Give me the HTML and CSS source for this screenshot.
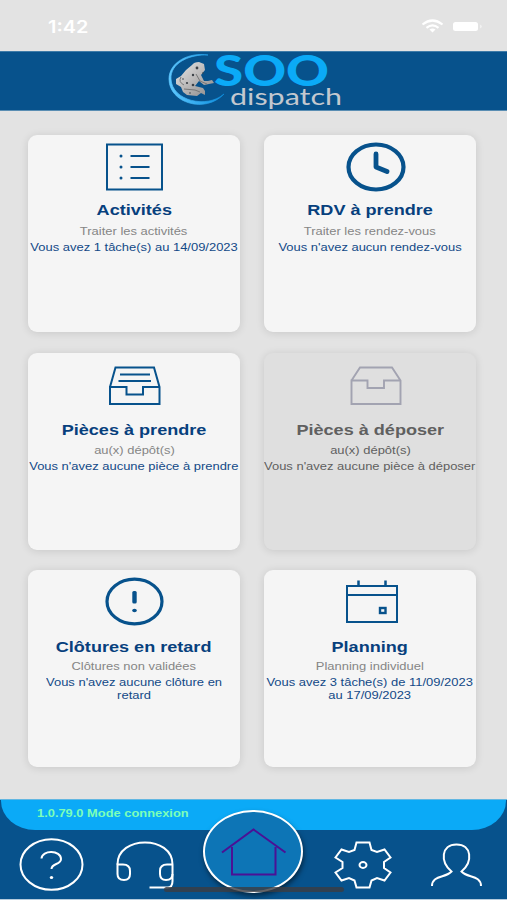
FILE: index.html
```
<!DOCTYPE html>
<html lang="fr">
<head>
  <meta charset="UTF-8" />
  <meta name="viewport" content="width=device-width, initial-scale=1.0"/>
  <title>SOO dispatch</title>
  <link rel="stylesheet" href="styles.css">
</head>
<body>

  <div class="status-bar">
    <span class="time">1:42</span>
    <svg class="status-icons" width="64" height="16" viewBox="0 0 64 16">
      <g fill="none" stroke="#fff" stroke-width="2.2">
        <path d="M1.5 5.5Q11.500 -2.500 21.500 5.500"/>
        <path d="M5.500 8.800Q11.500 4 17.500 8.800"/>
      </g>
      <path d="M8.500 10.500Q11.500 8.500 14.500 10.500L11.500 13.500Z" fill="#fff"/>
      <rect x="32" y="3" width="25" height="9" rx="2.500" fill="#fff"/>
      <path d="M59.500 5.500Q61.500 7.500 59.500 9.500Z" fill="#fff"/>
    </svg>
  </div>

  <header class="header">
    <svg class="logo" width="190" height="60" viewBox="160 51 190 60">
      <defs>
        <linearGradient id="ring" x1="0" y1="0" x2="1" y2="0">
          <stop offset="0" stop-color="#5ec8ff"/>
          <stop offset="1" stop-color="#0c8ede"/>
        </linearGradient>
        <linearGradient id="skin" x1="0" y1="0" x2="1" y2="1">
          <stop offset="0" stop-color="#e8e8e8"/>
          <stop offset="1" stop-color="#8b8888"/>
        </linearGradient>
      </defs>
      <path d="M208 55C189 52 169 62 169 79C169 103 205 114 224 94C207 109 172 101 171 79C170 63 190 54 208 55Z" fill="url(#ring)" stroke="url(#ring)" stroke-width=".7"/>
      <!-- frog -->
      <path d="M192 65Q194 62 199 62L204 64L205 70L201 75L204 81L208 81L212 80L214 83L209 84L204 85L199 81L195 86L203 88L205 91L205 95L201 93L197 96L187 95L183 92L181 87L176 84L176 79L181 76L186 70Z" fill="url(#skin)"/>
      <path d="M181 77Q178 82 184 85M184 89L195 90L200 92M196 74L200 81L207 84" fill="none" stroke="#777" stroke-width="1"/>
      <g fill="#3d4248">
        <circle cx="197" cy="68" r="1.400"/>
        <circle cx="193" cy="75" r="1.200"/>
        <circle cx="187" cy="83" r="1.100"/>
        <circle cx="193" cy="85" r="1.300"/>
        <circle cx="183" cy="79" r=".8"/>
        <circle cx="203" cy="73" r=".8"/>
        <circle cx="190" cy="93" r=".8"/>
      </g>
      <text class="logo-soo" x="214" y="86" textLength="115" lengthAdjust="spacingAndGlyphs">SOO</text>
      <text class="logo-dispatch" x="230" y="105" textLength="112" lengthAdjust="spacingAndGlyphs">dispatch</text>
    </svg>
  </header>

  <main class="cards">
    <div class="card">
      <svg class="icon" width="70" height="64" viewBox="99 135 70 64">
        <g fill="none" stroke="#07528c" stroke-width="2">
          <rect x="107" y="144.500" width="55" height="45"/>
          <path d="M130.500 156H149.500M130.500 167H149.500M130.500 178H149.500"/>
        </g>
        <g fill="#07528c">
          <circle cx="121" cy="156" r="1.500"/>
          <circle cx="121" cy="167" r="1.500"/>
          <circle cx="121" cy="178" r="1.500"/>
        </g>
      </svg>
      <h2>Activités</h2>
      <p class="subtitle">Traiter les activités</p>
      <p class="info">Vous avez 1 tâche(s) au 14/09/2023</p>
    </div>

    <div class="card">
      <svg class="icon" width="70" height="64" viewBox="335 135 70 64">
        <g fill="none" stroke="#07528c" stroke-linecap="round" stroke-linejoin="round">
          <ellipse cx="376" cy="167" rx="27.500" ry="22.500" stroke-width="4.200"/>
          <path d="M376 154V167L387 171.500" stroke-width="4.800"/>
        </g>
      </svg>
      <h2>RDV à prendre</h2>
      <p class="subtitle">Traiter les rendez-vous</p>
      <p class="info">Vous n'avez aucun rendez-vous</p>
    </div>

    <div class="card row-2">
      <svg class="icon" width="70" height="64" viewBox="99 353 70 64">
        <g fill="none" stroke="#07528c" stroke-width="2">
          <path d="M110 387L115.500 367.500H154L159.500 387V404H110V387H126.500V394.500H143V387H159.500"/>
          <path d="M120 374.500H150M118.500 381H151"/>
        </g>
      </svg>
      <h2>Pièces à prendre</h2>
      <p class="subtitle">au(x) dépôt(s)</p>
      <p class="info">Vous n'avez aucune pièce à prendre</p>
    </div>

    <div class="card row-2 disabled">
      <svg class="icon" width="70" height="64" viewBox="335 353 70 64">
        <path d="M351.500 380.500L360 367.500H392L400.500 380.500V404H351.500V380.500H367.500V388H384V380.500H400.500" fill="none" stroke="#a2a3b1" stroke-width="1.900"/>
      </svg>
      <h2>Pièces à déposer</h2>
      <p class="subtitle">au(x) dépôt(s)</p>
      <p class="info">Vous n'avez aucune pièce à déposer</p>
    </div>

    <div class="card row-3">
      <svg class="icon" width="70" height="64" viewBox="99 570 70 64">
        <ellipse cx="134.500" cy="601.500" rx="27.500" ry="22.300" fill="none" stroke="#07528c" stroke-width="3.200"/>
        <rect x="132.300" y="591" width="4.400" height="12.500" rx="1.500" fill="#07528c"/>
        <ellipse cx="134.500" cy="610.500" rx="2.300" ry="1.700" fill="#07528c"/>
      </svg>
      <h2>Clôtures en retard</h2>
      <p class="subtitle">Clôtures non validées</p>
      <p class="info">Vous n'avez aucune clôture en<br>retard</p>
    </div>

    <div class="card row-3">
      <svg class="icon" width="70" height="64" viewBox="335 570 70 64">
        <g fill="none" stroke="#07528c" stroke-width="2">
          <path d="M347 586H397V622H347ZM347 595H397"/>
          <path d="M358.500 580.500V586M385.500 580.500V586" stroke-width="2.500"/>
          <rect x="380" y="608" width="5.500" height="5" stroke-width="2.400"/>
        </g>
      </svg>
      <h2>Planning</h2>
      <p class="subtitle">Planning individuel</p>
      <p class="info">Vous avez 3 tâche(s) de 11/09/2023<br>au 17/09/2023</p>
    </div>
  </main>

  <footer class="footer">
    <div class="version-bar"><span>1.0.79.0 Mode connexion</span></div>
    <nav class="nav">
      <a href="#" aria-label="Aide">
        <svg width="68" height="60" viewBox="18 834 68 60">
          <ellipse cx="51.500" cy="864.500" rx="31" ry="25.300"/>
          <path d="M41.500 858.500C42 849.500 61 850 61 859C61 865 51.500 863 51.500 869"/>
          <ellipse class="dot" cx="51.500" cy="877.500" rx="1.700" ry="1.500"/>
        </svg>
      </a>
      <a href="#" aria-label="Support">
        <svg width="68" height="60" viewBox="111 834 68 60">
          <path d="M117.500 864.500C117.500 835 172.500 835 172.500 864.500V881Q172.500 887.500 167.500 887.500H149.500"/>
          <path d="M117.500 864.500H123Q130 864.500 130 871V874Q130 880 124 880Q117.500 880 117.500 874ZM172.500 864.500H167Q160 864.500 160 871V874Q160 880 166 880Q172.500 880 172.500 874"/>
        </svg>
      </a>
      <a href="#" class="home" aria-label="Accueil">
        <svg width="70" height="60" viewBox="218 821 70 60">
          <path d="M222 852.500L253.500 829.500L285.500 852.500M232 847V874.500H275.500V847"/>
        </svg>
      </a>
      <a href="#" aria-label="Paramètres">
        <svg width="68" height="60" viewBox="329 834 68 60">
          <path d="M356.500 842.500H369.500L371.500 850L377 852L384.500 849.500L390.500 857.500L384 862V868L390.500 872.500L384.500 880.500L377 878L371.500 880.500L369.500 887.500H356.500L354.500 880.500L349 878L341.500 880.500L335.500 872.500L342.500 868V862L335.500 857.500L341.500 849.500L349 852L354.500 850Z"/>
          <ellipse cx="363" cy="865" rx="3.500" ry="2.900"/>
        </svg>
      </a>
      <a href="#" aria-label="Profil">
        <svg width="68" height="60" viewBox="422 834 68 60">
          <path d="M432 886C432 875 446 878 451.500 871.500C440 862 441 844.500 456.500 844.500C472 844.500 473 862 461.500 871.500C467 878 481 875 481 886"/>
        </svg>
      </a>
    </nav>
    <div class="home-indicator"></div>
  </footer>

</body>
</html>
```
FILE: styles.css
```
* {
  box-sizing: border-box;
}

body {
  margin: 0;
  height: 900px;
  display: flex;
  flex-direction: column;
  background-color: #e3e3e3;
  font-family: "Liberation Sans", Arial, sans-serif;
  overflow: hidden;
}

.status-bar {
  height: 51px;
  flex: none;
  display: flex;
  justify-content: space-between;
  padding: 18px 22px 0 48px;
  color: #fff;
}

.time {
  font-family: Inter, sans-serif;
  font-size: 17px;
  font-weight: 600;
  line-height: 19px;
  transform: scaleX(1.17);
  transform-origin: left;
}

.status-icons {
  margin-top: 1px;
}

.header {
  height: 60px;
  flex: none;
  display: flex;
  justify-content: center;
  background-color: #07528c;
  border-top: 1px solid #3e7ba8;
  border-bottom: 1px solid #5a8eb3;
}

.logo {
  margin: -1px 0 0 3px;
  overflow: visible;
}

.logo-soo {
  font-family: Lato, sans-serif;
  font-size: 42px;
  font-weight: 900;
  fill: #0baaf7;
}

.logo-dispatch {
  font-family: Lato, sans-serif;
  font-size: 24px;
  fill: #c3c8cf;
}

.cards {
  flex: 1;
  display: grid;
  grid-template-columns: 212px 212px;
  grid-template-rows: 197px 197px 197px;
  gap: 20.5px 24px;
  padding: 24px 0 0 28px;
}

.card {
  display: flex;
  flex-direction: column;
  align-items: center;
  background-color: #f5f5f5;
  border-radius: 9px;
  box-shadow: 0 1px 9px rgba(0, 0, 0, 0.12);
}

.icon {
  flex: none;
  overflow: visible;
}

/* labels are set in an extended width */
.card h2,
.card p {
  margin: 0;
  white-space: nowrap;
  text-align: center;
  transform: scaleX(1.205);
}

.card h2 {
  margin-top: 1px;
  font-size: 15px;
  line-height: 20px;
  color: #07407d;
}

.card p {
  font-size: 10.75px;
  line-height: 13px;
}

.card .subtitle {
  margin-top: 5px;
  color: #858585;
}

.card .info {
  margin-top: 3px;
  color: #124987;
}

.card.row-2 h2,
.card.row-3 h2 {
  margin-top: 3px;
}

.card.row-2 .subtitle {
  margin-top: 4px;
}

.card.row-3 .subtitle {
  margin-top: 3px;
}

.card.disabled {
  background-color: #dfdfdf;
}

.card.disabled h2,
.card.disabled .subtitle,
.card.disabled .info {
  color: #606060;
}

.footer {
  position: relative;
  height: 101px;
  flex: none;
  background-color: #07528c;
  border-top: 1px solid #62b7e2;
  border-bottom: 1px solid #b5cbdc;
}

.version-bar {
  height: 30px;
  padding: 6px 36px;
  background-color: #0baaf7;
  border-radius: 0 0 34px 34px / 0 0 29px 29px;
  margin: 0 1px;
  font-size: 11px;
  font-weight: bold;
  line-height: 15px;
  color: #7dffb7;
}

.version-bar span {
  display: inline-block;
  transform: scaleX(1.17);
  transform-origin: left;
}

.nav {
  display: flex;
  justify-content: space-between;
  align-items: flex-start;
  padding: 4px 17px 0 18px;
}

.nav svg {
  display: block;
  fill: none;
  stroke: #fff;
  stroke-width: 2;
}

.nav .dot {
  fill: #fff;
  stroke: none;
}

.nav .home {
  display: flex;
  align-items: center;
  justify-content: center;
  width: 100px;
  height: 83px;
  margin: -24px 1px 0 -1px;
  background-color: #0d75b6;
  border: 2px solid #fff;
  border-radius: 50%;
  box-shadow: 1px 3px 5px rgba(0, 0, 0, 0.5);
}

.nav .home svg {
  margin-top: -2px;
  stroke: #4b1195;
}

.home-indicator {
  position: absolute;
  left: 164px;
  bottom: 7px;
  width: 180px;
  height: 5px;
  border-radius: 3px;
  background-color: rgba(60, 60, 65, 0.8);
}
```
